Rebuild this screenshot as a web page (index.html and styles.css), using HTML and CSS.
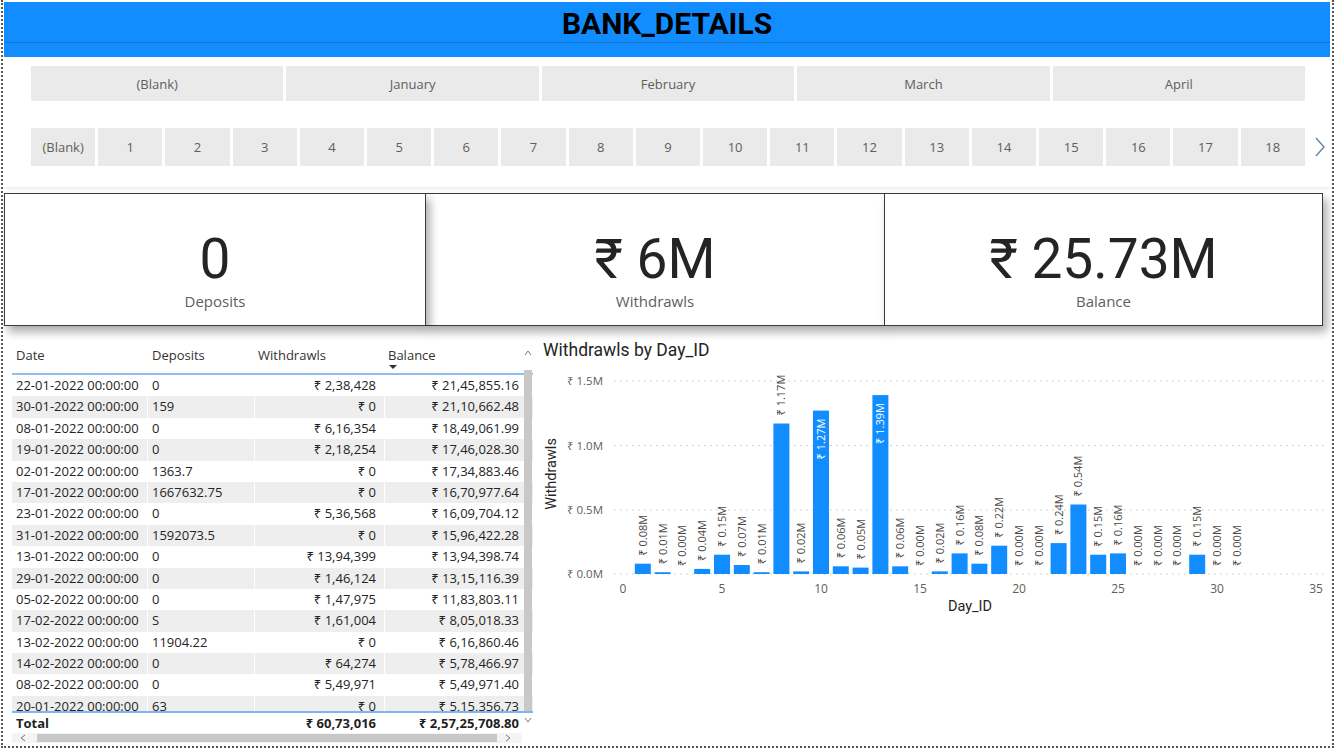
FILE: index.html
```html
<!DOCTYPE html>
<html>
<head>
<meta charset="utf-8">
<link rel="stylesheet" href="styles.css">
</head>
<body>
<div class="report">
  <header class="banner"><h1>BANK_DETAILS</h1></header>

  <section class="slicers">
    <div class="slicer-row months">
      <div class="chip">(Blank)</div>
      <div class="chip">January</div>
      <div class="chip">February</div>
      <div class="chip">March</div>
      <div class="chip">April</div>
    </div>
    <div class="slicer-row days">
      <div class="chip">(Blank)</div>
      <div class="chip">1</div><div class="chip">2</div><div class="chip">3</div>
      <div class="chip">4</div><div class="chip">5</div><div class="chip">6</div>
      <div class="chip">7</div><div class="chip">8</div><div class="chip">9</div>
      <div class="chip">10</div><div class="chip">11</div><div class="chip">12</div>
      <div class="chip">13</div><div class="chip">14</div><div class="chip">15</div>
      <div class="chip">16</div><div class="chip">17</div><div class="chip">18</div>
      <svg class="next" width="12" height="22" viewBox="0 0 12 22"><polyline points="2,2 10,11 2,20" fill="none" stroke="#5f7fa3" stroke-width="1.3"/></svg>
    </div>
  </section>

  <section class="cards">
    <div class="card c1"><div class="value">0</div><div class="label">Deposits</div></div>
    <div class="card c2"><div class="value">₹ 6M</div><div class="label">Withdrawls</div></div>
    <div class="card c3"><div class="value">₹ 25.73M</div><div class="label">Balance</div></div>
  </section>

  <section class="bottom">
    <div class="table">
      <div class="row head">
        <div class="cell">Date</div>
        <div class="cell">Deposits</div>
        <div class="cell">Withdrawls</div>
        <div class="cell sorted">Balance<span class="sort"></span></div>
      </div>
      <div class="body">
        <div class="row"><div class="cell">22-01-2022 00:00:00</div><div class="cell">0</div><div class="cell num">₹ 2,38,428</div><div class="cell num">₹ 21,45,855.16</div></div>
        <div class="row alt"><div class="cell">30-01-2022 00:00:00</div><div class="cell">159</div><div class="cell num">₹ 0</div><div class="cell num">₹ 21,10,662.48</div></div>
        <div class="row"><div class="cell">08-01-2022 00:00:00</div><div class="cell">0</div><div class="cell num">₹ 6,16,354</div><div class="cell num">₹ 18,49,061.99</div></div>
        <div class="row alt"><div class="cell">19-01-2022 00:00:00</div><div class="cell">0</div><div class="cell num">₹ 2,18,254</div><div class="cell num">₹ 17,46,028.30</div></div>
        <div class="row"><div class="cell">02-01-2022 00:00:00</div><div class="cell">1363.7</div><div class="cell num">₹ 0</div><div class="cell num">₹ 17,34,883.46</div></div>
        <div class="row alt"><div class="cell">17-01-2022 00:00:00</div><div class="cell">1667632.75</div><div class="cell num">₹ 0</div><div class="cell num">₹ 16,70,977.64</div></div>
        <div class="row"><div class="cell">23-01-2022 00:00:00</div><div class="cell">0</div><div class="cell num">₹ 5,36,568</div><div class="cell num">₹ 16,09,704.12</div></div>
        <div class="row alt"><div class="cell">31-01-2022 00:00:00</div><div class="cell">1592073.5</div><div class="cell num">₹ 0</div><div class="cell num">₹ 15,96,422.28</div></div>
        <div class="row"><div class="cell">13-01-2022 00:00:00</div><div class="cell">0</div><div class="cell num">₹ 13,94,399</div><div class="cell num">₹ 13,94,398.74</div></div>
        <div class="row alt"><div class="cell">29-01-2022 00:00:00</div><div class="cell">0</div><div class="cell num">₹ 1,46,124</div><div class="cell num">₹ 13,15,116.39</div></div>
        <div class="row"><div class="cell">05-02-2022 00:00:00</div><div class="cell">0</div><div class="cell num">₹ 1,47,975</div><div class="cell num">₹ 11,83,803.11</div></div>
        <div class="row alt"><div class="cell">17-02-2022 00:00:00</div><div class="cell">S</div><div class="cell num">₹ 1,61,004</div><div class="cell num">₹ 8,05,018.33</div></div>
        <div class="row"><div class="cell">13-02-2022 00:00:00</div><div class="cell">11904.22</div><div class="cell num">₹ 0</div><div class="cell num">₹ 6,16,860.46</div></div>
        <div class="row alt"><div class="cell">14-02-2022 00:00:00</div><div class="cell">0</div><div class="cell num">₹ 64,274</div><div class="cell num">₹ 5,78,466.97</div></div>
        <div class="row"><div class="cell">08-02-2022 00:00:00</div><div class="cell">0</div><div class="cell num">₹ 5,49,971</div><div class="cell num">₹ 5,49,971.40</div></div>
        <div class="row alt"><div class="cell">20-01-2022 00:00:00</div><div class="cell">63</div><div class="cell num">₹ 0</div><div class="cell num">₹ 5,15,356.73</div></div>
      </div>
      <div class="row total">
        <div class="cell">Total</div><div class="cell"></div><div class="cell num">₹ 60,73,016</div><div class="cell num">₹ 2,57,25,708.80</div>
      </div>
      <div class="hscroll">
        <svg class="harrow left" width="8" height="8" viewBox="0 0 8 8"><polyline points="6,1 2,4 6,7" fill="none" stroke="#777" stroke-width="1"/></svg>
        <div class="hthumb"></div>
        <svg class="harrow right" width="8" height="8" viewBox="0 0 8 8"><polyline points="2,1 6,4 2,7" fill="none" stroke="#777" stroke-width="1"/></svg>
      </div>
      <div class="vscroll">
        <svg class="varrow up" width="8" height="8" viewBox="0 0 8 8"><polyline points="1,6 4,2 7,6" fill="none" stroke="#777" stroke-width="1"/></svg>
        <div class="vthumb"></div>
        <svg class="varrow down" width="8" height="8" viewBox="0 0 8 8"><polyline points="1,2 4,6 7,2" fill="none" stroke="#777" stroke-width="1"/></svg>
      </div>
    </div>

    <div class="chart">
      <svg width="795" height="409" viewBox="0 0 795 409">
        <g transform="translate(-535 -337)">
          <text class="ctitle" x="543" y="356">Withdrawls by Day_ID</text>
          <g class="grid">
            <line x1="614" y1="381" x2="1325" y2="381"/>
            <line x1="614" y1="445.5" x2="1325" y2="445.5"/>
            <line x1="614" y1="510" x2="1325" y2="510"/>
            <line x1="614" y1="574" x2="1325" y2="574"/>
          </g>
          <g class="ylab">
            <text x="603" y="385">₹ 1.5M</text>
            <text x="603" y="449.5">₹ 1.0M</text>
            <text x="603" y="514">₹ 0.5M</text>
            <text x="603" y="578">₹ 0.0M</text>
          </g>
          <g class="xlab">
            <text x="623" y="593">0</text>
            <text x="722" y="593">5</text>
            <text x="821" y="593">10</text>
            <text x="920" y="593">15</text>
            <text x="1019" y="593">20</text>
            <text x="1118" y="593">25</text>
            <text x="1217" y="593">30</text>
            <text x="1316" y="593">35</text>
          </g>
          <text class="atitle" transform="translate(556 474) rotate(-90)" text-anchor="middle">Withdrawls</text>
          <text class="atitle" x="970" y="611" text-anchor="middle">Day_ID</text>
          <g class="bars">
            <rect x="634.8" y="563.7" width="16" height="10.3"/>
            <rect x="654.6" y="572.2" width="16" height="1.8"/>
            <rect x="694.2" y="568.9" width="16" height="5.1"/>
            <rect x="714" y="554.7" width="16" height="19.3"/>
            <rect x="733.8" y="565" width="16" height="9"/>
            <rect x="753.6" y="572.2" width="16" height="1.8"/>
            <rect x="773.4" y="423.5" width="16" height="150.5"/>
            <rect x="793.2" y="571.4" width="16" height="2.6"/>
            <rect x="813" y="410.6" width="16" height="163.4"/>
            <rect x="832.8" y="566.3" width="16" height="7.7"/>
            <rect x="852.6" y="567.6" width="16" height="6.4"/>
            <rect x="872.4" y="395.1" width="16" height="178.9"/>
            <rect x="892.2" y="566.3" width="16" height="7.7"/>
            <rect x="931.8" y="571.4" width="16" height="2.6"/>
            <rect x="951.6" y="553.4" width="16" height="20.6"/>
            <rect x="971.4" y="563.7" width="16" height="10.3"/>
            <rect x="991.2" y="545.7" width="16" height="28.3"/>
            <rect x="1050.6" y="543.1" width="16" height="30.9"/>
            <rect x="1070.4" y="504.5" width="16" height="69.5"/>
            <rect x="1090.2" y="554.7" width="16" height="19.3"/>
            <rect x="1110" y="553.4" width="16" height="20.6"/>
            <rect x="1189.2" y="554.7" width="16" height="19.3"/>
          </g>
          <g class="dl">
            <text transform="translate(646.8 555.7) rotate(-90)">₹ 0.08M</text>
            <text transform="translate(666.6 564.2) rotate(-90)">₹ 0.01M</text>
            <text transform="translate(686.4 566) rotate(-90)">₹ 0.00M</text>
            <text transform="translate(706.2 560.9) rotate(-90)">₹ 0.04M</text>
            <text transform="translate(726 546.7) rotate(-90)">₹ 0.15M</text>
            <text transform="translate(745.8 557) rotate(-90)">₹ 0.07M</text>
            <text transform="translate(765.6 564.2) rotate(-90)">₹ 0.01M</text>
            <text transform="translate(785.4 415.5) rotate(-90)">₹ 1.17M</text>
            <text transform="translate(805.2 563.4) rotate(-90)">₹ 0.02M</text>
            <text class="in" transform="translate(825 418.6) rotate(-90)">₹ 1.27M</text>
            <text transform="translate(844.8 558.3) rotate(-90)">₹ 0.06M</text>
            <text transform="translate(864.6 559.6) rotate(-90)">₹ 0.05M</text>
            <text class="in" transform="translate(884.4 403.1) rotate(-90)">₹ 1.39M</text>
            <text transform="translate(904.2 558.3) rotate(-90)">₹ 0.06M</text>
            <text transform="translate(924 566) rotate(-90)">₹ 0.00M</text>
            <text transform="translate(943.8 563.4) rotate(-90)">₹ 0.02M</text>
            <text transform="translate(963.6 545.4) rotate(-90)">₹ 0.16M</text>
            <text transform="translate(983.4 555.7) rotate(-90)">₹ 0.08M</text>
            <text transform="translate(1003.2 537.7) rotate(-90)">₹ 0.22M</text>
            <text transform="translate(1023 566) rotate(-90)">₹ 0.00M</text>
            <text transform="translate(1042.8 566) rotate(-90)">₹ 0.00M</text>
            <text transform="translate(1062.6 535.1) rotate(-90)">₹ 0.24M</text>
            <text transform="translate(1082.4 496.5) rotate(-90)">₹ 0.54M</text>
            <text transform="translate(1102.2 546.7) rotate(-90)">₹ 0.15M</text>
            <text transform="translate(1122 545.4) rotate(-90)">₹ 0.16M</text>
            <text transform="translate(1141.8 566) rotate(-90)">₹ 0.00M</text>
            <text transform="translate(1161.6 566) rotate(-90)">₹ 0.00M</text>
            <text transform="translate(1181.4 566) rotate(-90)">₹ 0.00M</text>
            <text transform="translate(1201.2 546.7) rotate(-90)">₹ 0.15M</text>
            <text transform="translate(1221 566) rotate(-90)">₹ 0.00M</text>
            <text transform="translate(1240.8 566) rotate(-90)">₹ 0.00M</text>
          </g>
        </g>
      </svg>
    </div>
  </section>
</div>
</body>
</html>
```
FILE: styles.css
```css
* { box-sizing: border-box; }

body {
  margin: 0;
  background: #ffffff;
  font-family: "Open Sans", "Noto Sans", "DejaVu Sans", sans-serif;
  color: #252423;
}

.report {
  margin-left: 1px;
  width: 1333px;
  height: 748px;
  border: 2px dotted #555555;
  border-top: none;
  position: relative;
  overflow: hidden;
}

/* ---------- banner ---------- */
.banner {
  margin: 2px 2px 0 1px;
  height: 55px;
  background: #118dff;
}
.banner h1 {
  margin: 0;
  height: 41px;
  line-height: 43px;
  text-align: center;
  font-family: Roboto, "DejaVu Sans", sans-serif;
  font-weight: 700;
  font-size: 30px;
  color: #000000;
  border-bottom: 1px solid #1a73c9;
}

/* ---------- slicers ---------- */
.slicers {
  height: 130px;
  padding: 9px 0 0 28px;
  box-shadow: 0 3px 3px -1px rgba(0, 0, 0, 0.07);
}
.slicer-row {
  width: 1274px;
  display: flex;
  gap: 3px;
  position: relative;
}
.months { height: 35px; }
.days { height: 38px; margin-top: 27px; }
.chip {
  flex: 1;
  background: #eaeaea;
  color: #605e5c;
  font-size: 13px;
  display: flex;
  align-items: center;
  justify-content: center;
  white-space: nowrap;
}
.next {
  position: absolute;
  right: -21px;
  top: 8px;
}

/* ---------- cards ---------- */
.cards {
  display: flex;
  height: 133px;
  margin: 6px 0 0 1px;
}
.card {
  position: relative;
  background: #ffffff;
  border: 1px solid #3a3a3a;
  padding-top: 33px;
  text-align: center;
  box-shadow: 4px 6px 9px rgba(0, 0, 0, 0.33);
}
.c1 { width: 422px; z-index: 3; }
.c2 { width: 460px; margin-left: -1px; z-index: 1; }
.c3 { width: 439px; margin-left: -1px; z-index: 2; }
.value {
  font-family: Roboto, "DejaVu Sans", sans-serif;
  font-size: 55px;
  line-height: 64px;
  color: #252423;
}
.label {
  font-size: 15px;
  line-height: 20px;
  color: #605e5c;
}

/* ---------- bottom ---------- */
.bottom {
  display: flex;
  margin-top: 11px;
  height: 409px;
}

.table {
  position: relative;
  width: 523px;
  margin-left: 7px;
  height: 409px;
  padding-left: 2px;
  font-size: 13px;
  color: #252423;
}
.row {
  display: grid;
  grid-template-columns: 135px 107px 130px 138px;
  height: 21.4px;
  line-height: 21.4px;
  white-space: nowrap;
}
.row .cell { padding-left: 4px; overflow: hidden; }
.row .cell + .cell { border-left: 1px solid #ffffff; padding-left: 4px; }
.row .cell.num { text-align: right; padding-right: 8px; }
.row .cell.num:last-child { padding-right: 3px; }
.alt { background: #eeeeee; }

.head {
  height: 38px;
  line-height: 17px;
  padding-top: 10px;
  border-bottom: 2px solid #8ebff0;
  color: #333333;
}
.head .cell + .cell { padding-left: 3px; }
.head .cell:nth-child(2) { padding-left: 4px; }
.sorted { position: relative; }
.sort {
  position: absolute;
  left: 4px;
  top: 18px;
  border-left: 4px solid transparent;
  border-right: 4px solid transparent;
  border-top: 4px solid #333333;
}

.body {
  height: 336px;
  overflow: hidden;
}

.total {
  height: 22px;
  line-height: 20px;
  border-top: 2px solid #7db5ee;
  font-weight: 700;
  color: #1f1f1f;
}

.hscroll {
  position: relative;
  height: 10px;
  width: 510px;
  background: #f4f4f4;
}
.hthumb {
  position: absolute;
  left: 25px;
  top: 1px;
  width: 460px;
  height: 8px;
  background: #c8c8c8;
}
.harrow { position: absolute; top: 1px; }
.harrow.left { left: 7px; }
.harrow.right { left: 492px; }

.vscroll {
  position: absolute;
  left: 513px;
  top: 10px;
  width: 10px;
  height: 380px;
}
.vthumb {
  position: absolute;
  left: 1px;
  top: 23px;
  width: 8px;
  height: 341px;
  background: #c8c8c8;
}
.varrow { position: absolute; left: 1px; }
.varrow.up { top: 2px; }
.varrow.down { top: 369px; }

/* ---------- chart ---------- */
.chart {
  width: 795px;
  height: 409px;
  margin-left: 2px;
}
.chart svg { display: block; }
.ctitle {
  font-family: Roboto, "DejaVu Sans", sans-serif;
  font-size: 17.5px;
  fill: #252423;
}
.grid line {
  stroke: #c8c6c4;
  stroke-width: 1;
  stroke-dasharray: 1.5 4.5;
}
.ylab text {
  font-size: 11.5px;
  fill: #605e5c;
  text-anchor: end;
}
.xlab text {
  font-size: 12px;
  fill: #605e5c;
  text-anchor: middle;
}
.atitle {
  font-family: Roboto, "DejaVu Sans", sans-serif;
  font-size: 14.5px;
  fill: #252423;
}
.bars rect { fill: #118dff; }
.dl text {
  font-size: 11px;
  fill: #4a4846;
}
.dl text.in {
  fill: #ffffff;
  text-anchor: end;
}
```
